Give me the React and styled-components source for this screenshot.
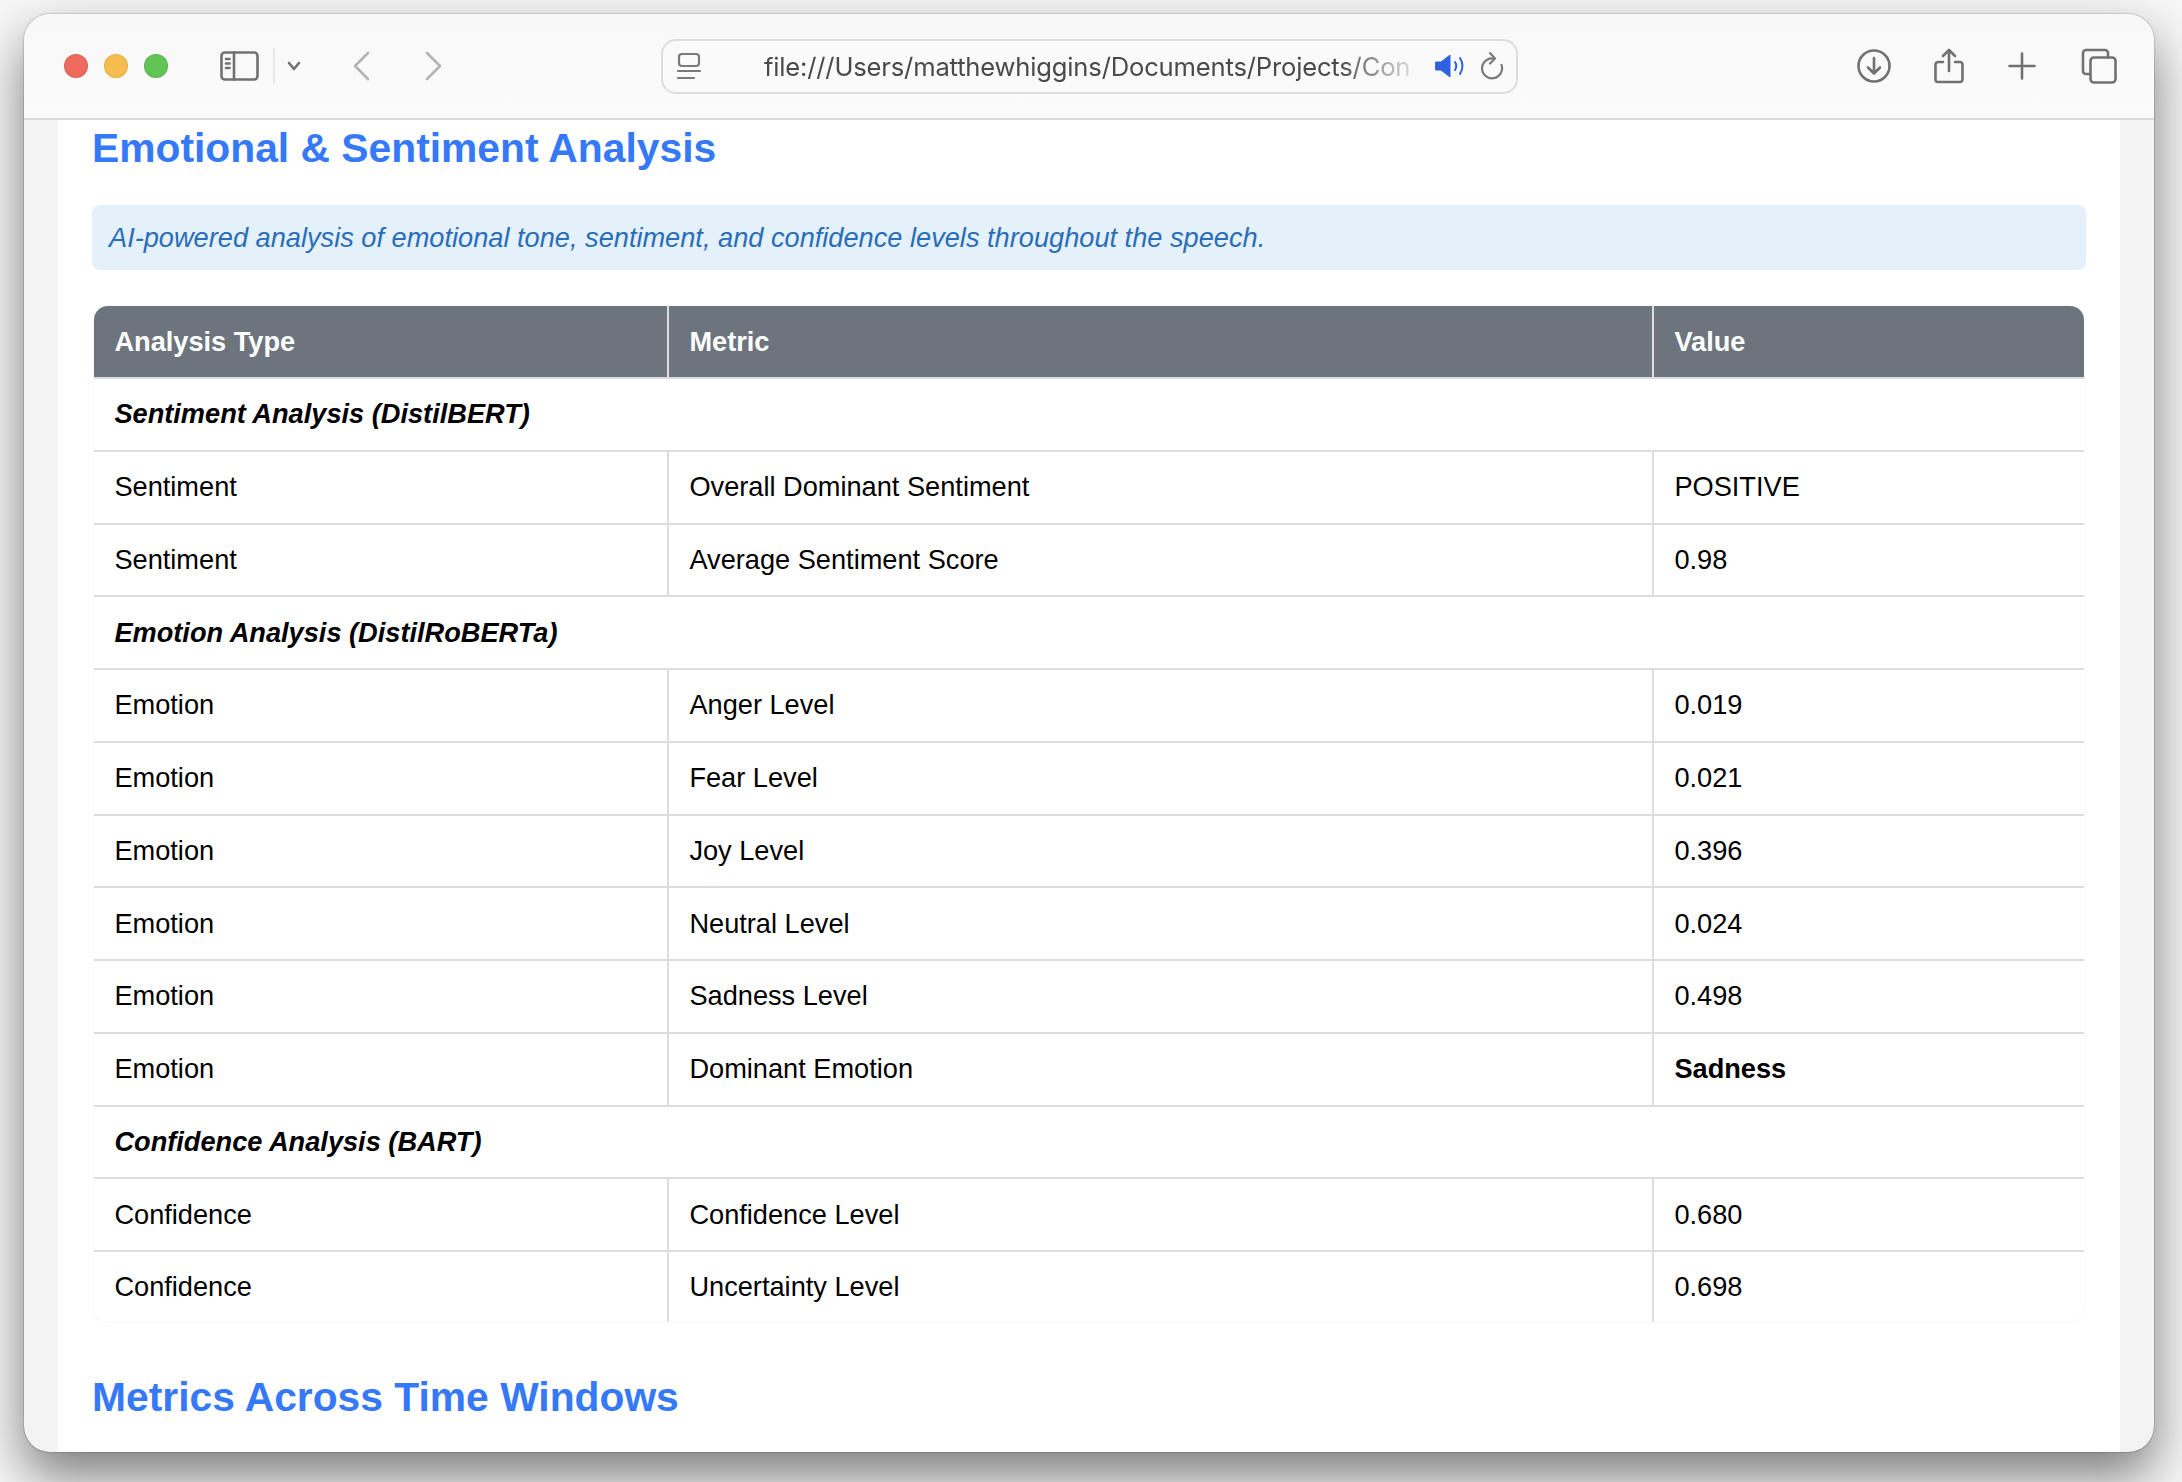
import React from "react";
import styled, { createGlobalStyle } from "styled-components";

const GlobalStyle = createGlobalStyle`
  html, body {
    margin: 0;
    padding: 0;
    background: #f7f7f7;
    font-family: "Liberation Sans", Arial, sans-serif;
  }
  body { height: 1482px; overflow: hidden; }
`;

const Page = styled.div`
  height: 1482px;
  padding: 14px 28px 30px 24px;
  box-sizing: border-box;
`;

const Window = styled.div`
  height: 1438px;
  border-radius: 26px;
  overflow: hidden;
  display: flex;
  flex-direction: column;
  background: #f3f3f3;
  box-shadow: 0 0 1.5px rgba(0, 0, 0, 0.6), 0 24px 52px rgba(0, 0, 0, 0.5);
`;

const Toolbar = styled.header`
  flex: 0 0 104px;
  height: 104px;
  box-sizing: content-box;
  display: flex;
  align-items: center;
  padding-left: 40px;
  background: linear-gradient(180deg, #f8f8f8, #fbfbfb);
  border-bottom: 2px solid #dcdcdc;
`;

const Lights = styled.div`
  display: flex;
  gap: 16px;
`;

const Light = styled.span`
  width: 24px;
  height: 24px;
  border-radius: 50%;
  background: ${(p) => p.color};
  box-shadow: inset 0 0 0 1px rgba(0, 0, 0, 0.08);
`;

const ToolIcon = styled.svg`
  flex: none;
  display: block;
  margin-left: ${(p) => p.$gap}px;
  fill: none;
  stroke: ${(p) => p.$ink || "#717171"};
  stroke-width: 2.6;
  stroke-linecap: round;
  stroke-linejoin: round;
`;

const Divider = styled.span`
  flex: none;
  width: 2px;
  height: 36px;
  margin-left: 14px;
  background: #e6e6e6;
`;

const UrlBar = styled.div`
  flex: none;
  box-sizing: border-box;
  width: 857px;
  height: 55px;
  margin-left: 218px;
  padding: 0 10px 0 14px;
  display: flex;
  align-items: center;
  background: #fafafa;
  border: 2px solid #dedede;
  border-radius: 15px;
`;

const UrlText = styled.div`
  flex: none;
  width: 652px;
  margin-left: 63px;
  white-space: nowrap;
  font-family: Inter, "Liberation Sans", sans-serif;
  font-size: 25.6px;
  letter-spacing: -0.18px;
  color: #4a4a4a;
  -webkit-mask-image: linear-gradient(90deg, #000 88%, rgba(0, 0, 0, 0.12) 100%);
  mask-image: linear-gradient(90deg, #000 88%, rgba(0, 0, 0, 0.12) 100%);
`;

const UrlIcon = styled.svg`
  flex: none;
  display: block;
  margin-left: ${(p) => p.$gap || 0}px;
  fill: none;
  stroke: #7a7a7a;
  stroke-width: 2.2;
  stroke-linecap: round;
  stroke-linejoin: round;
`;

const Scroller = styled.main`
  flex: 1;
  min-height: 0;
  margin: 0 34px;
  padding: 0 34px;
  overflow: hidden;
  background: #fff;
`;

const SectionTitle = styled.h2`
  margin: ${(p) => p.$top}px 0 0;
  font-size: 40.8px;
  line-height: 50px;
  font-weight: 700;
  color: #3579f8;
`;

const Note = styled.p`
  margin: 32px 0 36px;
  height: 65px;
  padding: 0 17px;
  box-sizing: border-box;
  display: flex;
  align-items: center;
  background: #e4f1fb;
  border-radius: 8px;
  font-size: 27.2px;
  font-style: italic;
  color: #2a6db8;
`;

const Table = styled.table`
  width: 1990px;
  margin-left: 2px;
  table-layout: fixed;
  border-collapse: separate;
  border-spacing: 0;
  border-radius: 14px;
  overflow: hidden;
  font-size: 27.2px;
  color: #000;
  box-shadow: 0 0 2px rgba(0, 0, 0, 0.08);
`;

const HeadCell = styled.th`
  box-sizing: border-box;
  height: 73px;
  padding: 0 20.4px;
  text-align: left;
  font-weight: 700;
  color: #fff;
  background: #6c757d;
  border-bottom: 2px solid #ddd;
  border-right: ${(p) => (p.$last ? "none" : "2px solid #ddd")};
`;

const Cell = styled.td`
  box-sizing: border-box;
  height: ${(p) => (p.$end ? 70 : 72.75)}px;
  padding: 0 20.4px;
  border-bottom: ${(p) => (p.$end ? "none" : "2px solid #ddd")};
  border-right: ${(p) => (p.$last ? "none" : "2px solid #ddd")};
  font-weight: ${(p) => (p.$strong ? 700 : 400)};
`;

const GroupCell = styled.td`
  box-sizing: border-box;
  height: 72.75px;
  padding: 0 20.4px;
  border-bottom: 2px solid #ddd;
  font-weight: 700;
  font-style: italic;
`;

const rows = [
  { group: "Sentiment Analysis (DistilBERT)" },
  { type: "Sentiment", metric: "Overall Dominant Sentiment", value: "POSITIVE" },
  { type: "Sentiment", metric: "Average Sentiment Score", value: "0.98" },
  { group: "Emotion Analysis (DistilRoBERTa)" },
  { type: "Emotion", metric: "Anger Level", value: "0.019" },
  { type: "Emotion", metric: "Fear Level", value: "0.021" },
  { type: "Emotion", metric: "Joy Level", value: "0.396" },
  { type: "Emotion", metric: "Neutral Level", value: "0.024" },
  { type: "Emotion", metric: "Sadness Level", value: "0.498" },
  { type: "Emotion", metric: "Dominant Emotion", value: "Sadness", strong: true },
  { group: "Confidence Analysis (BART)" },
  { type: "Confidence", metric: "Confidence Level", value: "0.680" },
  { type: "Confidence", metric: "Uncertainty Level", value: "0.698", end: true },
];

const App = () => (
  <Page>
    <GlobalStyle />
    <Window>
      <Toolbar>
        <Lights>
          <Light color="#ee6a5f" />
          <Light color="#f5bd4f" />
          <Light color="#61c454" />
        </Lights>
        <ToolIcon $gap={52} width="39" height="30" viewBox="0 0 39 30">
          <rect x="1.5" y="1.5" width="36" height="27" rx="3.5" />
          <path d="M14 1.5v27M6 8h3.5M6 12.5h3.5M6 17h3.5" />
        </ToolIcon>
        <Divider />
        <ToolIcon $gap={12} width="14" height="10" viewBox="0 0 14 10">
          <path d="M2 2l5 6 5-6" />
        </ToolIcon>
        <ToolIcon $gap={51} $ink="#b4b4b4" width="18" height="30" viewBox="0 0 18 30">
          <path d="M16 2L3 15l13 13" />
        </ToolIcon>
        <ToolIcon $gap={55} $ink="#b4b4b4" width="18" height="30" viewBox="0 0 18 30">
          <path d="M2 2l13 13L2 28" />
        </ToolIcon>
        <UrlBar>
          <UrlIcon width="24" height="28" viewBox="0 0 24 28">
            <rect x="2" y="2" width="20" height="12" rx="3" />
            <path d="M1 19h22M1 26h16" />
          </UrlIcon>
          <UrlText>file:///Users/matthewhiggins/Documents/Projects/Con</UrlText>
          <UrlIcon $gap={19} width="30" height="24" viewBox="0 0 30 24">
            <path d="M1 8h5l9-7v22l-9-7H1z" fill="#2f62e0" stroke="#2f62e0" strokeWidth="1" />
            <path d="M20 8c1.6 2.5 1.6 5.5 0 8M25 4c3 4.800 3 11 0 16" stroke="#2f62e0" strokeWidth="2" />
          </UrlIcon>
          <UrlIcon $gap={15} width="24" height="29" viewBox="0 0 24 29">
            <path d="M14 6.500A10 10 0 1 0 21.500 13" />
            <path d="M10 1l5 5.500-5 5" />
          </UrlIcon>
        </UrlBar>
        <ToolIcon $gap={339} width="34" height="34" viewBox="0 0 34 34">
          <circle cx="17" cy="17" r="15.500" />
          <path d="M17 9v15M11 18.500l6 6 6-6" />
        </ToolIcon>
        <ToolIcon $gap={43} width="30" height="36" viewBox="0 0 30 36">
          <path d="M9 14H4a2.500 2.500 0 0 0-2.500 2.500v15A2.500 2.500 0 0 0 4 34h22a2.500 2.500 0 0 0 2.500-2.500v-15A2.500 2.500 0 0 0 26 14h-5" />
          <path d="M15 23V2M9 8l6-6 6 6" />
        </ToolIcon>
        <ToolIcon $gap={44} width="28" height="28" viewBox="0 0 28 28">
          <path d="M14 1.500v25M1.500 14h25" />
        </ToolIcon>
        <ToolIcon $gap={45} width="36" height="36" viewBox="0 0 36 36">
          <path d="M8 26H5a3 3 0 0 1-3-3V5a3 3 0 0 1 3-3h19a3 3 0 0 1 3 3v4" />
          <rect x="9.500" y="9.500" width="25" height="25" rx="3.500" />
        </ToolIcon>
      </Toolbar>
      <Scroller>
        <SectionTitle $top={3}>Emotional &amp; Sentiment Analysis</SectionTitle>
        <Note>AI-powered analysis of emotional tone, sentiment, and confidence levels throughout the speech.</Note>
        <Table>
          <colgroup>
            <col width="575" />
            <col width="985" />
            <col width="430" />
          </colgroup>
          <thead>
            <tr>
              <HeadCell>Analysis Type</HeadCell>
              <HeadCell>Metric</HeadCell>
              <HeadCell $last>Value</HeadCell>
            </tr>
          </thead>
          <tbody>
            {rows.map((row) =>
              row.group ? (
                <tr key={row.group}>
                  <GroupCell colSpan={3}>{row.group}</GroupCell>
                </tr>
              ) : (
                <tr key={row.metric}>
                  <Cell $end={row.end}>{row.type}</Cell>
                  <Cell $end={row.end}>{row.metric}</Cell>
                  <Cell $end={row.end} $last $strong={row.strong}>{row.value}</Cell>
                </tr>
              )
            )}
          </tbody>
        </Table>
        <SectionTitle $top={50}>Metrics Across Time Windows</SectionTitle>
      </Scroller>
    </Window>
  </Page>
);

export default App;
